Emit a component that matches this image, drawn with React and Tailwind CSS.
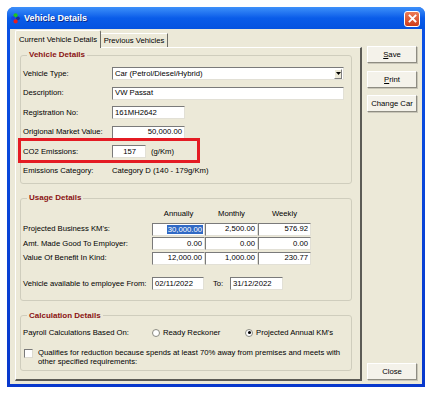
import React from "react";

function Box({ className = "", children }) {
  return (
    <div
      className={
        "h-[13px] bg-white border border-t-[#7a7a7a] border-l-[#7a7a7a] border-r-[#e2e0d6] border-b-[#e2e0d6] flex items-center px-[2px] leading-none whitespace-nowrap " +
        className
      }
    >
      {children}
    </div>
  );
}

function Btn({ children }) {
  return (
    <div className="h-[17px] w-[50px] flex items-center justify-center bg-[#f4f2ea] border border-t-white border-l-white border-r-[#8e8c82] border-b-[#8e8c82] shadow-[1px_1px_0_#c9c6b8] leading-none whitespace-nowrap">
      {children}
    </div>
  );
}

function Group({ title, className = "", children }) {
  return (
    <fieldset
      className={
        "border border-[#cfcdbd] rounded-[3px] px-[2px] " + className
      }
    >
      <legend className="ml-[4px] px-[2px] text-[8px] leading-[10px] font-bold text-[#8a1212]">
        {title}
      </legend>
      {children}
    </fieldset>
  );
}

export default function App() {
  return (
    <div className="w-[435px] h-[396px] bg-white pl-[7px] pt-[7px] font-['Liberation_Sans',Arial,sans-serif] text-[7.7px] text-black">
      <div className="w-[418px] h-[380px] flex flex-col rounded-t-[7px] bg-gradient-to-b from-[#0b52e6] to-[#0838cc] overflow-hidden">
        {/* Title bar */}
        <div className="h-[22px] shrink-0 flex items-center pl-[4px] pr-[5px] bg-gradient-to-b from-[#3d90fa] via-[#0a5ce9] to-[#0553e0]">
          <svg width="9" height="11" viewBox="0 0 9 11" className="shrink-0">
            <circle cx="4.6" cy="2.3" r="2.1" fill="#22c21c" />
            <circle cx="2.2" cy="5.3" r="2.1" fill="#1b3fe4" />
            <circle cx="6.9" cy="5.3" r="1.9" fill="#1a2f9a" />
            <circle cx="4.6" cy="8.4" r="2.1" fill="#e51c1c" />
          </svg>
          <span className="ml-[4px] text-white font-bold text-[9px] leading-none [text-shadow:1px_1px_0_#0a2a8a]">
            Vehicle Details
          </span>
          <div className="flex-1" />
          <div className="w-[16px] h-[16px] mt-[1px] rounded-[3px] border border-white bg-gradient-to-b from-[#ec7a55] to-[#cf3b16] flex items-center justify-center">
            <svg width="9" height="9" viewBox="0 0 9 9">
              <path d="M1.5 1.5 L7.5 7.5 M7.5 1.5 L1.5 7.5" stroke="white" strokeWidth="1.8" strokeLinecap="square" />
            </svg>
          </div>
        </div>

        {/* Client */}
        <div className="flex-1 mx-[3px] mb-[3px] bg-[#ece9d8] flex pl-[5px] pt-[1px] pb-[3px]">
          {/* Left: tabs */}
          <div className="w-[347px] flex flex-col">
            <div className="h-[17px] flex items-end shrink-0">
              <div className="relative z-10 h-[18px] -mb-[1px] w-[86px] flex items-center justify-center bg-[#ece9d8] border-t border-l border-r border-t-white border-l-white border-r-[#6e6d66] rounded-t-[2px] leading-none whitespace-nowrap">
                Current Vehicle Details
              </div>
              <div className="h-[14px] w-[67px] flex items-center justify-center border-t border-r border-t-white border-r-[#6e6d66] leading-none whitespace-nowrap">
                Previous Vehicles
              </div>
            </div>
            <div className="flex-1 border-t border-l border-t-white border-l-white border-r-2 border-b-2 border-r-[#5c5b55] border-b-[#5c5b55] pl-[4px] pr-[8px] pt-[2px]">
              {/* Vehicle Details */}
              <Group title="Vehicle Details" className="pt-[7px] pb-[5.5px]">
                <div className="flex flex-col gap-[6.5px]">
                  <div className="h-[13px] flex items-center">
                    <span className="w-[89px]">Vehicle Type:</span>
                    <Box className="w-[232px] justify-between pr-0">
                      <span>Car (Petrol/Diesel/Hybrid)</span>
                      <div className="w-[8px] h-[10px] mr-[1px] bg-[#ece9d8] border border-t-white border-l-white border-r-[#808080] border-b-[#808080] flex items-center justify-center">
                        <svg width="5" height="3" viewBox="0 0 5 3">
                          <path d="M0 0 L5 0 L2.5 3 Z" fill="black" />
                        </svg>
                      </div>
                    </Box>
                  </div>
                  <div className="h-[13px] flex items-center">
                    <span className="w-[89px]">Description:</span>
                    <Box className="w-[232px]">VW Passat</Box>
                  </div>
                  <div className="h-[13px] flex items-center">
                    <span className="w-[89px]">Registration No:</span>
                    <Box className="w-[73px]">161MH2642</Box>
                  </div>
                  <div className="h-[13px] flex items-center">
                    <span className="w-[89px]">Origional Market Value:</span>
                    <Box className="w-[73px] justify-end">50,000.00</Box>
                  </div>
                  <div className="relative h-[13px] flex items-center">
                    <span className="w-[89px]">CO2 Emissions:</span>
                    <Box className="w-[34px] justify-end pr-[9px]">157</Box>
                    <span className="ml-[5px]">(g/Km)</span>
                    <div className="absolute left-[-5px] top-[-7px] w-[182px] h-[25px] border-[3px] border-[#e41b23]" />
                  </div>
                  <div className="h-[13px] flex items-center">
                    <span className="w-[89px]">Emissions Category:</span>
                    <span>Category D (140 - 179g/Km)</span>
                  </div>
                </div>
              </Group>

              {/* Usage Details */}
              <Group title="Usage Details" className="mt-[9px] pt-[6px] pb-[9.5px]">
                <div className="h-[10px] flex items-center">
                  <span className="w-[129px]" />
                  <span className="w-[53px] text-center">Annually</span>
                  <span className="w-[53px] text-center">Monthly</span>
                  <span className="w-[53px] text-center">Weekly</span>
                </div>
                <div className="mt-[3.5px] flex flex-col gap-[1.5px]">
                  <div className="h-[13px] flex items-center">
                    <span className="w-[129px]">Projected Business KM's:</span>
                    <Box className="w-[53px] justify-end pr-[1px]">
                      <span className="bg-[#316ac5] text-white px-[1px] leading-[9px]">30,000.00</span>
                    </Box>
                    <Box className="w-[53px] justify-end">2,500.00</Box>
                    <Box className="w-[53px] justify-end">576.92</Box>
                  </div>
                  <div className="h-[13px] flex items-center">
                    <span className="w-[129px]">Amt. Made Good To Employer:</span>
                    <Box className="w-[53px] justify-end">0.00</Box>
                    <Box className="w-[53px] justify-end">0.00</Box>
                    <Box className="w-[53px] justify-end">0.00</Box>
                  </div>
                  <div className="h-[13px] flex items-center">
                    <span className="w-[129px]">Value Of Benefit In Kind:</span>
                    <Box className="w-[53px] justify-end">12,000.00</Box>
                    <Box className="w-[53px] justify-end">1,000.00</Box>
                    <Box className="w-[53px] justify-end">230.77</Box>
                  </div>
                </div>
                <div className="mt-[12.5px] h-[13px] flex items-center">
                  <span className="w-[129px]">Vehicle available to employee From:</span>
                  <Box className="w-[52px]">02/11/2022</Box>
                  <span className="ml-[9px] w-[17px]">To:</span>
                  <Box className="w-[53px]">31/12/2022</Box>
                </div>
              </Group>

              {/* Calculation Details */}
              <Group title="Calculation Details" className="mt-[10px] pt-[7px] pb-[4px]">
                <div className="h-[10px] flex items-center">
                  <span className="w-[129px]">Payroll Calculations Based On:</span>
                  <div className="w-[93px] flex items-center">
                    <div className="w-[8px] h-[8px] rounded-full bg-white border border-[#8a8a80]" />
                    <span className="ml-[3px]">Ready Reckoner</span>
                  </div>
                  <div className="flex items-center">
                    <div className="w-[8px] h-[8px] rounded-full bg-white border border-[#8a8a80] flex items-center justify-center">
                      <div className="w-[3px] h-[3px] rounded-full bg-black" />
                    </div>
                    <span className="ml-[3px]">Projected Annual KM's</span>
                  </div>
                </div>
                <div className="mt-[10px] flex items-start">
                  <div className="ml-[1px] mt-[1px] w-[9px] h-[9px] bg-white border border-t-[#7a7a7a] border-l-[#7a7a7a] border-r-[#dcdad0] border-b-[#dcdad0]" />
                  <div className="ml-[5px] leading-[9px] whitespace-nowrap">
                    Qualifies for reduction because spends at least 70% away from premises and meets with
                    <br />
                    other specified requirements:
                  </div>
                </div>
              </Group>
            </div>
          </div>

          {/* Right: buttons */}
          <div className="ml-[5px] w-[50px] flex flex-col pt-[16px] pb-[1px]">
            <Btn>
              <span><span className="underline">S</span>ave</span>
            </Btn>
            <div className="mt-[8px]">
              <Btn>
                <span><span className="underline">P</span>rint</span>
              </Btn>
            </div>
            <div className="mt-[7px]">
              <Btn>Change Car</Btn>
            </div>
            <div className="mt-auto">
              <Btn>Close</Btn>
            </div>
          </div>
        </div>
      </div>
    </div>
  );
}
